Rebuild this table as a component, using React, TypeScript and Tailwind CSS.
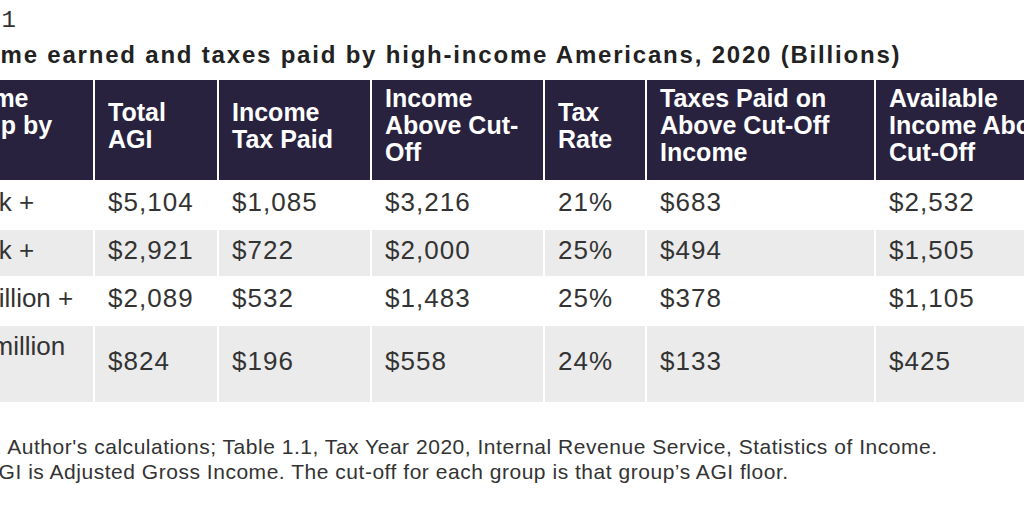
const headers = [
  "Income Group by AGI",
  "Total AGI",
  "Income Tax Paid",
  "Income Above Cut-Off",
  "Tax Rate",
  "Taxes Paid on Above Cut-Off Income",
  "Available Income Above Cut-Off",
]

const rows = [
  ["$200k +", "$5,104", "$1,085", "$3,216", "21%", "$683", "$2,532"],
  ["$500k +", "$2,921", "$722", "$2,000", "25%", "$494", "$1,505"],
  ["$1 million +", "$2,089", "$532", "$1,483", "25%", "$378", "$1,105"],
  ["$10 million +", "$824", "$196", "$558", "24%", "$133", "$425"],
]

const widths = [167, 124, 153, 173, 102, 229, 220]

export default function App() {
  return (
    <div className="w-[1024px] h-[512px] overflow-hidden bg-white text-[#333] font-['Liberation_Sans',Arial,sans-serif]">
      <div className="ml-[-74px] w-[1168px]">
        <div className="pt-[7px] ml-[-11px] text-[24px] leading-[28px] text-[#333] font-['Liberation_Mono',monospace]">
          Table 1
        </div>
        <h2 className="mt-[6px] mb-[9px] pl-[18px] text-[24px] leading-[28px] font-bold tracking-[0.075em] text-[#222] whitespace-nowrap">
          Income earned and taxes paid by high-income Americans, 2020 (Billions)
        </h2>
        <table className="table-fixed border-collapse w-[1168px]">
          <colgroup>
            {widths.map((w, i) => (
              <col key={i} style={{ width: w }} />
            ))}
          </colgroup>
          <thead>
            <tr className="bg-[#29223f]">
              {headers.map((h) => (
                <th
                  key={h}
                  className="border-2 border-white px-[13px] pt-[5px] pb-[14px] text-left align-middle text-[25px] leading-[27px] font-bold text-white"
                >
                  {h}
                </th>
              ))}
            </tr>
          </thead>
          <tbody>
            {rows.map((r, i) => (
              <tr key={i} className={i % 2 === 1 ? "bg-[#ebebeb]" : "bg-white"}>
                {r.map((c, j) => (
                  <td
                    key={j}
                    className={`border-2 border-white px-[13px] pt-[5px] pb-[11px] align-middle text-[26px] leading-[30px] ${
                      j === 0 ? "" : "tracking-[0.04em]"
                    }`}
                  >
                    {c}
                  </td>
                ))}
              </tr>
            ))}
          </tbody>
        </table>
        <div className="mt-[30px] text-[21px] leading-[25px] tracking-[0.025em] text-[#333]">
          <p>Source: Author's calculations; Table 1.1, Tax Year 2020, Internal Revenue Service, Statistics of Income.</p>
          <p>Note: AGI is Adjusted Gross Income. The cut-off for each group is that group’s AGI floor.</p>
        </div>
      </div>
    </div>
  )
}
